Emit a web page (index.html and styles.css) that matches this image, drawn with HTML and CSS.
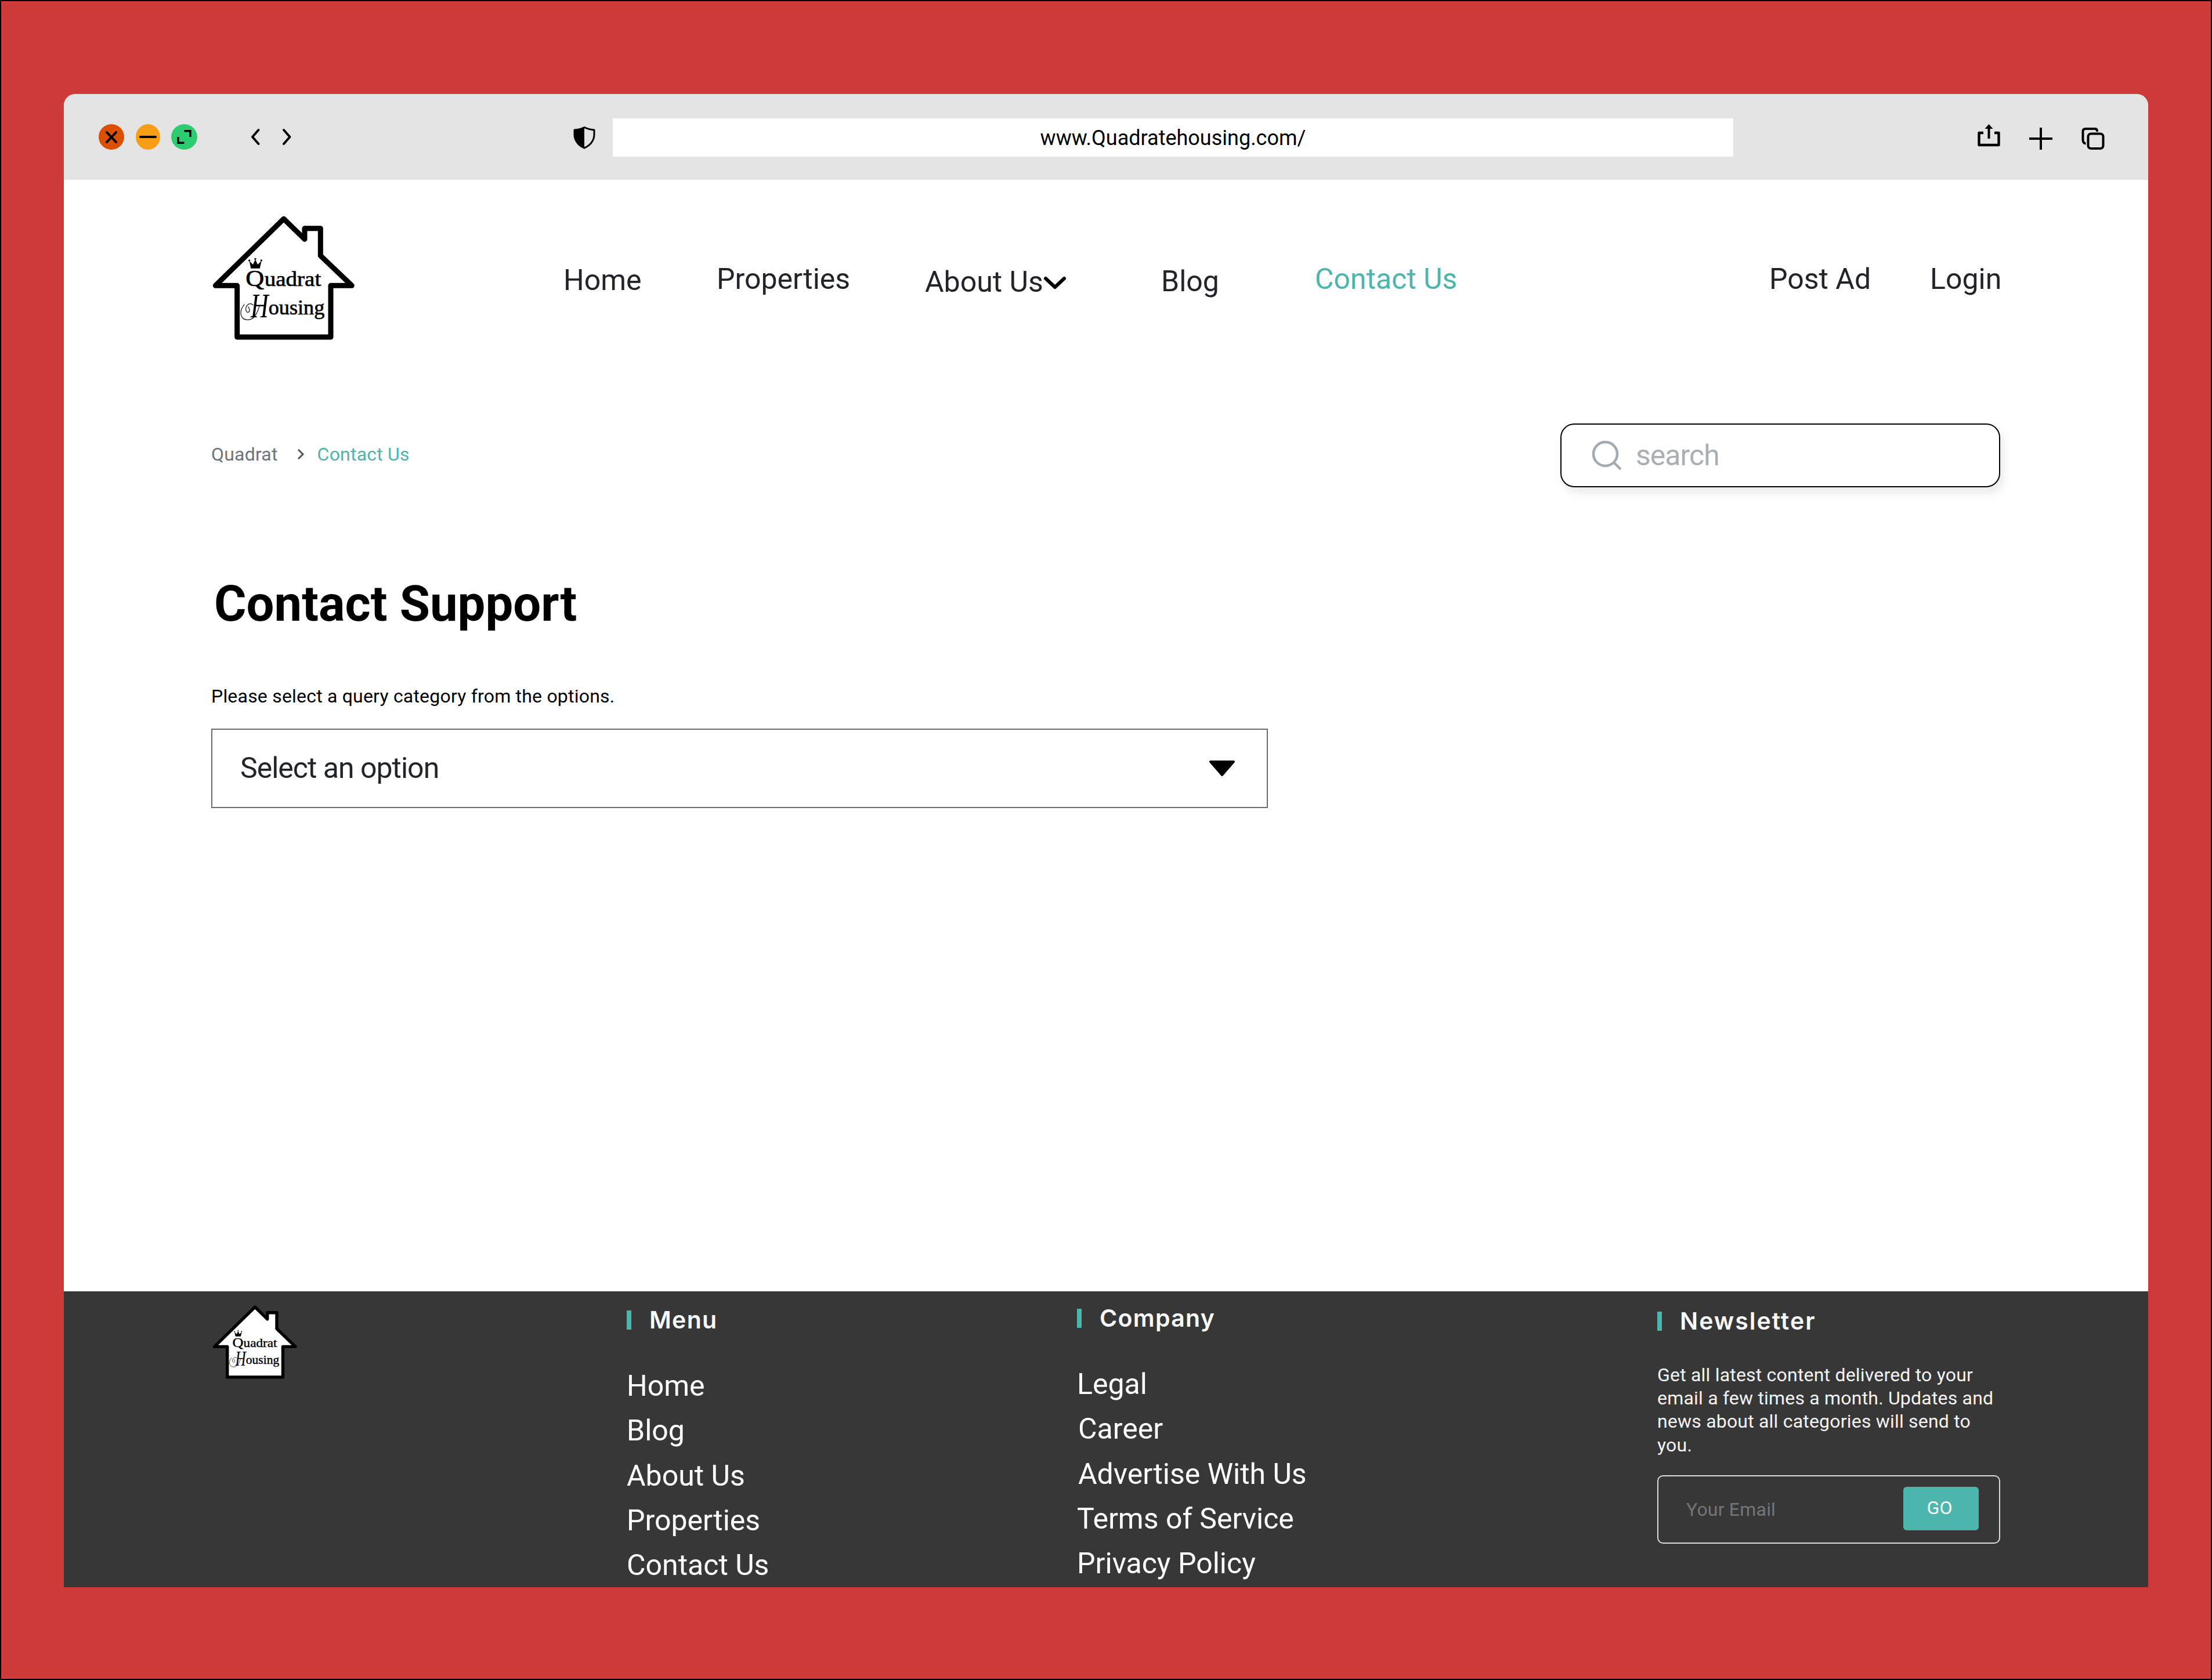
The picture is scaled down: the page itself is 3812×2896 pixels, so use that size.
FILE: index.html
```html
<!DOCTYPE html>
<html lang="en">
<head>
<meta charset="utf-8">
<title>Quadrat Housing - Contact Us</title>
<link rel="stylesheet" href="styles.css">
</head>
<body>
<svg class="defs" width="0" height="0">
  <symbol id="logo" viewBox="0 0 900 780">
    <path d="M447 82L555 187V131H637V272L799 427H690V693H206V427H94Z" fill="#fefefe" stroke="#000" stroke-width="27" stroke-linejoin="round"/>
    <path d="M277 338L269 300L288 318L300 292L312 318L332 300L323 338Z" fill="#000"/>
    <circle cx="269" cy="297" r="5"/><circle cx="300" cy="289" r="5"/><circle cx="331" cy="297" r="5"/>
    <text x="250" y="428" font-size="118" textLength="96" lengthAdjust="spacingAndGlyphs" class="logo-text">Q</text>
    <text x="347" y="428" font-size="105" textLength="293" lengthAdjust="spacingAndGlyphs" class="logo-text">uadrat</text>
    <path d="M262 536C282 560 258 576 252 556C246 530 270 510 290 528M244 524C215 555 218 604 262 604C296 602 310 570 322 530" fill="none" stroke="#222" stroke-width="4"/>
    <text x="276" y="592" font-size="176" textLength="92" lengthAdjust="spacingAndGlyphs" class="logo-script">H</text>
    <text x="368" y="577" font-size="105" textLength="290" lengthAdjust="spacingAndGlyphs" class="logo-text">ousing</text>
  </symbol>
</svg>
<div class="window">
  <div class="toolbar">
    <svg class="light" width="44" height="44" viewBox="0 0 44 44"><circle cx="22" cy="22" r="22" fill="#db5000"/><path d="M14 14L30 31M30 14L14 31" stroke="#000" stroke-width="4" stroke-linecap="round"/></svg>
    <svg class="light minimize" width="42" height="44" viewBox="0 0 42 44"><ellipse cx="21" cy="22" rx="21" ry="22" fill="#f99d15"/><path d="M8 22H34" stroke="#000" stroke-width="4" stroke-linecap="round"/></svg>
    <svg class="light expand" width="45" height="44" viewBox="0 0 45 44"><ellipse cx="22.500" cy="22" rx="22.500" ry="22" fill="#2ecc71"/><path d="M22.500 11.700H33V22M12 22V32.300H22.500" fill="none" stroke="#000" stroke-width="3.400"/></svg>
    <svg class="back" width="20" height="32" viewBox="0 0 20 32"><path d="M15.500 4L5 16L15.500 28" fill="none" stroke="#000" stroke-width="4" stroke-linecap="round" stroke-linejoin="round"/></svg>
    <svg class="forward" width="20" height="32" viewBox="0 0 20 32"><path d="M4 4L14.500 16L4 28" fill="none" stroke="#000" stroke-width="4" stroke-linecap="round" stroke-linejoin="round"/></svg>
    <svg class="shield" width="40" height="40" viewBox="0 0 40 40"><path d="M20 2.500C25 5 30 6.500 37 7V15C37 25 30 34 20 38C10 34 3 25 3 15V7C10 6.500 15 5 20 2.500Z" fill="none" stroke="#000" stroke-width="3" stroke-linejoin="round"/><path d="M20 2.500V38C10 34 3 25 3 15V7C10 6.500 15 5 20 2.500Z"/></svg>
    <div class="url">www.Quadratehousing.com/</div>
    <svg class="share" width="43" height="40" viewBox="0 0 43 40"><path d="M12 16H4.500V37H38.500V16H31" fill="none" stroke="#000" stroke-width="4.400" stroke-linejoin="round"/><path d="M21.500 26V7" stroke="#000" stroke-width="4"/><path d="M21.500 1L28.500 9H14.500Z"/></svg>
    <svg class="plus" width="40" height="40" viewBox="0 0 40 40"><path d="M0 20H40M20 1V39" stroke="#000" stroke-width="4"/></svg>
    <svg class="tabs" width="40" height="40" viewBox="0 0 40 40"><rect x="11.500" y="11.500" width="26" height="25.500" rx="5" fill="none" stroke="#000" stroke-width="4"/><path d="M27 8V6.500Q27 3 23 3H7Q2.500 3 2.500 7.500V22Q2.500 28 7.500 28.500" fill="none" stroke="#000" stroke-width="4"/></svg>
  </div>
  <header class="site-header">
    <svg class="logo" width="300" height="260"><use href="#logo"/></svg>
    <nav class="nav">
      <a class="home">Home</a>
      <a>Properties</a>
      <a class="about">About Us<svg width="40" height="26" viewBox="0 0 40 26"><path d="M4 5L20 20L36 5" fill="none" stroke="#000" stroke-width="6" stroke-linecap="round" stroke-linejoin="round"/></svg></a>
      <a class="blog">Blog</a>
      <a class="active">Contact Us</a>
      <a>Post Ad</a>
      <a>Login</a>
    </nav>
  </header>
  <main class="main">
    <div class="subheader">
      <div class="crumbs">
        <span>Quadrat</span>
        <svg width="16" height="24" viewBox="0 0 16 24"><path d="M4 4L12 12L4 20" fill="none" stroke="#555" stroke-width="3"/></svg>
        <span class="active">Contact Us</span>
      </div>
      <div class="search">
        <svg width="54" height="54" viewBox="0 0 54 54"><circle cx="23.500" cy="24.500" r="20.500" fill="none" stroke="#a3abb0" stroke-width="4.500"/><path d="M38 39L50 51" stroke="#a3abb0" stroke-width="4.500"/></svg>
        <span>search</span>
      </div>
    </div>
    <h1 class="title">Contact Support</h1>
    <p class="hint">Please select a query category from the options.</p>
    <div class="select">
      <span>Select an option</span>
      <svg width="48" height="30" viewBox="0 0 48 30"><path d="M4 3H44L24 26Z" stroke="#000" stroke-width="4" stroke-linejoin="round"/></svg>
    </div>
  </main>
  <footer class="footer">
    <svg class="footer-logo" width="178" height="156"><use href="#logo"/></svg>
    <section class="column menu">
      <h2>Menu</h2>
      <ul><li>Home</li><li>Blog</li><li>About Us</li><li>Properties</li><li>Contact Us</li></ul>
    </section>
    <section class="column company">
      <h2>Company</h2>
      <ul><li>Legal</li><li class="inset">Career</li><li class="inset">Advertise With Us</li><li>Terms of Service</li><li>Privacy Policy</li></ul>
    </section>
    <section class="column newsletter">
      <h2>Newsletter</h2>
      <p>Get all latest content delivered to your<br>email a few times a month. Updates and<br>news about all categories will send to<br>you.</p>
      <div class="email"><span>Your Email</span><button class="go">GO</button></div>
    </section>
  </footer>
</div>
</body>
</html>
```
FILE: styles.css
```css
* { box-sizing: border-box; }
body {
  margin: 0;
  width: 3812px;
  height: 2896px;
  padding: 160px 108px;
  border: 2px solid #000;
  background: #cd3a39;
  font-family: Roboto, "Liberation Sans", sans-serif;
  color: #212529;
}
svg { display: block; flex: none; }
symbol { overflow: visible; }
.defs { position: absolute; }
.logo-text { font-family: "Liberation Serif", serif; stroke: #000; stroke-width: 2; }
.logo-script { font-family: "Liberation Serif", serif; font-style: italic; }

.window {
  display: flex;
  flex-direction: column;
  width: 3592px;
  height: 2574px;
  border-radius: 20px 20px 0 0;
  background: #fefefe;
  overflow: hidden;
}

.toolbar {
  display: flex;
  align-items: flex-start;
  height: 148px;
  padding-left: 60px;
  background: #e4e4e4;
}
.light { margin-top: 52px; }
.minimize { margin-left: 20px; }
.expand { margin-left: 19px; }
.back { margin: 58px 0 0 90px; }
.forward { margin: 58px 0 0 35px; }
.shield { margin: 55px 0 0 482px; }
.url {
  width: 1931px;
  height: 66px;
  margin: 42px 0 0 29px;
  background: #fff;
  color: #000;
  font-size: 36px;
  line-height: 68px;
  text-align: center;
}
.share { margin: 51px 0 0 419px; }
.plus { margin: 57px 0 0 48px; }
.tabs { margin: 57px 0 0 50px; }

.site-header {
  display: flex;
  align-items: flex-start;
  height: 420px;
  padding: 40px 0 0 230px;
}
.nav {
  display: grid;
  grid-template-columns: 264px 359px 407px 265px 783px 277px 130px;
  align-items: start;
  margin: 101px 0 0 331px;
  font-size: 50px;
  line-height: 60px;
  white-space: nowrap;
}
.nav .home { margin-top: 2px; }
.nav .about { display: flex; margin-top: 5px; }
.nav .about svg { margin: 19px 0 0 0; }
.nav .blog { margin-top: 4px; }
.active { color: #4db6ac; }

.main {
  flex: 1;
  padding: 0 255px 0 254px;
}
.subheader {
  display: flex;
  justify-content: space-between;
}
.crumbs {
  display: flex;
  align-items: flex-start;
  margin-top: 33px;
  color: #6c757d;
  font-size: 32px;
  letter-spacing: .2px;
  line-height: 40px;
}
.crumbs svg { margin: 8px 21px 0 31px; }
.search {
  display: flex;
  align-items: center;
  gap: 22px;
  width: 758px;
  height: 110px;
  padding-left: 52px;
  border: 2.5px solid #000;
  border-radius: 24px;
  background: #fff;
  box-shadow: 6px 10px 12px rgba(0, 0, 0, .07);
  color: #a9b0b4;
  font-size: 50px;
  letter-spacing: -1px;
}
.title {
  margin: 151px 0 0 5px;
  color: #000;
  font-size: 85px;
  font-weight: 700;
  line-height: 100px;
}
.hint {
  margin: 89px 0 0;
  color: #000;
  font-size: 32px;
  letter-spacing: .2px;
  line-height: 40px;
}
.select {
  display: flex;
  align-items: center;
  justify-content: space-between;
  width: 1821px;
  height: 137px;
  margin-top: 36px;
  padding: 0 53px 0 48px;
  border: 2.5px solid #6b6b6b;
  font-size: 50px;
  letter-spacing: -1px;
}
.select span { padding-bottom: 2px; }

.footer {
  display: grid;
  grid-template-columns: 729px 776px 1000px 591px;
  align-items: start;
  height: 510px;
  padding: 0 0 0 241px;
  background: #373737;
  color: #fff;
}
.footer-logo { margin-top: 10px; }
.column h2 {
  display: flex;
  align-items: center;
  gap: 31px;
  height: 33px;
  margin: 0;
  color: #f8f9fa;
  font-family: Inter, sans-serif;
  font-size: 41px;
  font-weight: 600;
  letter-spacing: 1.3px;
  line-height: 30px;
  padding-bottom: 2px;
}
.column h2::before {
  content: "";
  width: 8px;
  height: 33px;
  margin-bottom: -2px;
  background: #4db6ac;
}
.column ul {
  margin: 59px 0 0;
  padding: 0;
  list-style: none;
  font-size: 50px;
  line-height: 77.3px;
}
.inset { padding-left: 2px; }
.menu { padding-top: 33px; }
.company { padding-top: 30px; }
.newsletter { padding-top: 35px; }
.newsletter h2 { letter-spacing: 2px; }
.newsletter p {
  margin: 56px 0 0;
  color: #f4f4f4;
  font-size: 32px;
  letter-spacing: .2px;
  line-height: 40.2px;
  white-space: nowrap;
}
.email {
  display: flex;
  align-items: flex-start;
  justify-content: space-between;
  width: 591px;
  height: 118px;
  margin-top: 32px;
  padding: 18px 35px 0 48px;
  border: 2.5px solid #dcdcdc;
  border-radius: 10px;
  color: #757575;
  font-size: 32px;
  letter-spacing: .2px;
}
.email span { margin-top: 19px; line-height: 40px; }
.go {
  width: 130px;
  height: 75px;
  padding: 0 5px 3px 0;
  border: 0;
  border-radius: 6px;
  background: #4db6ac;
  color: #fff;
  font: 32px Roboto, sans-serif;
}
```
